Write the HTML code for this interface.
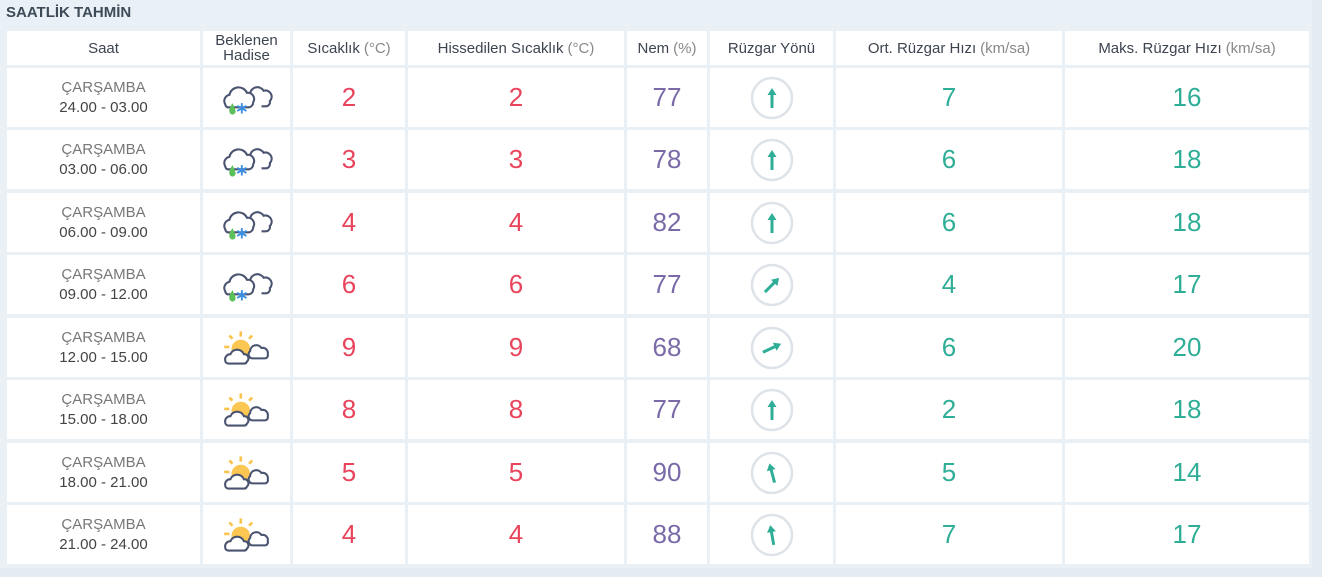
<!DOCTYPE html>
<html><head><meta charset="utf-8"><style>
body{margin:0;width:1322px;height:577px;background:#e4ecf1;font-family:"Liberation Sans",sans-serif;overflow:hidden;position:relative}
.panel{position:absolute;left:0;top:0;width:1312px;height:568px;background:#e9f1f6}
h1{position:absolute;left:6px;top:4px;margin:0;font-size:15px;font-weight:bold;color:#3e4a57}
.c{position:absolute;background:#fff;display:flex;align-items:center;justify-content:center;text-align:center;color:#444}
.h{font-size:15px;line-height:15px;color:#3d4450}
.h span{color:#888;margin-left:4px}
.t{font-size:15px;line-height:20px;color:#444}
.t b{font-weight:normal;color:#777}
.n{font-size:26px}
.red{color:#e8445c}.pur{color:#7a6aa8}.grn{color:#2fae97}
</style></head><body>
<div class="panel"></div>
<h1>SAATLİK TAHMİN</h1>
<div id="g"></div>
<script>
var X=[[7,193],[203,87],[293,112],[408,216],[627,80],[710,123],[836,226],[1065,244]];
var H=['Saat','Beklenen<br>Hadise','Sıcaklık<span>(°C)</span>','Hissedilen Sıcaklık<span>(°C)</span>','Nem<span>(%)</span>','Rüzgar Yönü','Ort. Rüzgar Hızı<span>(km/sa)</span>','Maks. Rüzgar Hızı<span>(km/sa)</span>'];
var snow='<svg width="56" height="38" viewBox="0 0 54 36"><path d="M30 14a7 7 0 0 1 13-3a6 6 0 0 1 6 10a4 4 0 0 1-4 5h-4" fill="#fff" stroke="#4a5470" stroke-width="2"/><path d="M6 24a6 6 0 0 1 4-9a9 9 0 0 1 17-2a6 6 0 0 1 6 9a5 5 0 0 1-4 5H8a4 4 0 0 1-2-3z" fill="#fff" stroke="#4a5470" stroke-width="2"/><path d="M13 23q-4 6-3 8a3 3 0 0 0 6 0q0-2-3-8z" fill="#5bbf5a"/><g stroke="#3b8ee0" stroke-width="1.8"><path d="M22 23v10M17.5 25.5l9 5M17.5 30.5l9-5"/></g></svg>';
var sun='<svg width="56" height="38" viewBox="0 0 54 36"><g stroke="#f9c34c" stroke-width="2.5"><path d="M21 2v5M10 6l3 3M32 6l-3 3M5 17h5"/></g><circle cx="21" cy="19" r="9" fill="#fbc652"/><path d="M30 21a6 6 0 0 1 11-3a5 5 0 0 1 6 6a3 3 0 0 1-3 4H32a4 4 0 0 1-2-7z" fill="#fff" stroke="#4a5470" stroke-width="2"/><path d="M6 30a5 5 0 0 1 5-6a7 7 0 0 1 13 0a4 4 0 0 1 3 7a3 3 0 0 1-3 2H9a3 3 0 0 1-3-3z" fill="#fff" stroke="#4a5470" stroke-width="2"/></svg>';
function arr(d){return '<svg width="46" height="46" viewBox="0 0 46 46"><circle cx="23" cy="23" r="20" fill="none" stroke="#dde3e8" stroke-width="2.5"/><g transform="rotate('+d+' 23 23)"><path d="M23 33V18" stroke="#2fae97" stroke-width="3"/><path d="M18.5 20L23 13L27.5 20Z" fill="#2fae97"/></g></svg>';}
var R=[["24.00 - 03.00",snow,2,77,0,7,16],["03.00 - 06.00",snow,3,78,0,6,18],["06.00 - 09.00",snow,4,82,0,6,18],["09.00 - 12.00",snow,6,77,45,4,17],["12.00 - 15.00",sun,9,68,65,6,20],["15.00 - 18.00",sun,8,77,0,2,18],["18.00 - 21.00",sun,5,90,-15,5,14],["21.00 - 24.00",sun,4,88,-10,7,17]];
var s='';
function cell(i,top,h,cls,html){s+='<div class="c '+cls+'" style="left:'+X[i][0]+'px;width:'+X[i][1]+'px;top:'+top+'px;height:'+h+'px">'+html+'</div>';}
H.forEach(function(t,i){cell(i,31,34,'h',t);});
R.forEach(function(r,k){var t=Math.round(68+k*62.43);
cell(0,t,59,'t','<div><b>ÇARŞAMBA</b><br>'+r[0]+'</div>');cell(1,t,59,'',r[1]);
cell(2,t,59,'n red',r[2]);cell(3,t,59,'n red',r[2]);cell(4,t,59,'n pur',r[3]);
cell(5,t,59,'',arr(r[4]));cell(6,t,59,'n grn',r[5]);cell(7,t,59,'n grn',r[6]);});
document.getElementById('g').innerHTML=s;
</script>
</body></html>
